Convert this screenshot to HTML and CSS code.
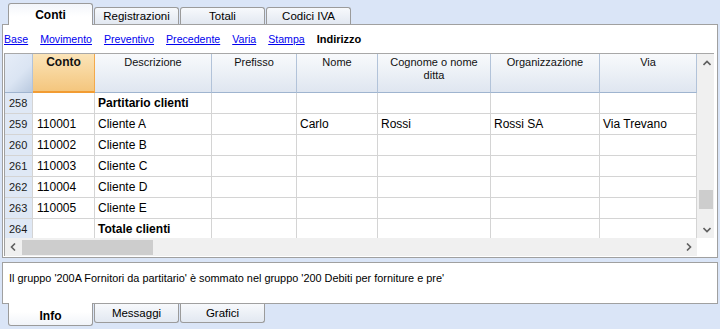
FILE: index.html
```html
<!DOCTYPE html>
<html lang="it">
<head>
<meta charset="utf-8">
<title>Conti</title>
<link rel="stylesheet" href="styles.css">
</head>
<body>
<div class="tabs tabs-top">
  <div class="tab active">Conti</div>
  <div class="tab">Registrazioni</div>
  <div class="tab">Totali</div>
  <div class="tab">Codici IVA</div>
</div>
<div class="panel">
  <div class="views">
    <a href="#">Base</a>
    <a href="#">Movimento</a>
    <a href="#">Preventivo</a>
    <a href="#">Precedente</a>
    <a href="#">Varia</a>
    <a href="#">Stampa</a>
    <span class="current">Indirizzo</span>
  </div>
  <div class="grid">
    <div class="table">
      <div class="row head">
        <div class="c c-num corner"></div>
        <div class="c c-conto sel">Conto</div>
        <div class="c c-desc">Descrizione</div>
        <div class="c c-pref">Prefisso</div>
        <div class="c c-nome">Nome</div>
        <div class="c c-cogn">Cognome o nome<br>ditta</div>
        <div class="c c-org">Organizzazione</div>
        <div class="c c-via">Via</div>
      </div>
      <div class="row">
        <div class="c c-num">258</div><div class="c c-conto"></div><div class="c c-desc b">Partitario clienti</div><div class="c c-pref"></div><div class="c c-nome"></div><div class="c c-cogn"></div><div class="c c-org"></div><div class="c c-via"></div>
      </div>
      <div class="row">
        <div class="c c-num">259</div><div class="c c-conto">110001</div><div class="c c-desc">Cliente A</div><div class="c c-pref"></div><div class="c c-nome">Carlo</div><div class="c c-cogn">Rossi</div><div class="c c-org">Rossi SA</div><div class="c c-via">Via Trevano</div>
      </div>
      <div class="row">
        <div class="c c-num">260</div><div class="c c-conto">110002</div><div class="c c-desc">Cliente B</div><div class="c c-pref"></div><div class="c c-nome"></div><div class="c c-cogn"></div><div class="c c-org"></div><div class="c c-via"></div>
      </div>
      <div class="row">
        <div class="c c-num">261</div><div class="c c-conto">110003</div><div class="c c-desc">Cliente C</div><div class="c c-pref"></div><div class="c c-nome"></div><div class="c c-cogn"></div><div class="c c-org"></div><div class="c c-via"></div>
      </div>
      <div class="row">
        <div class="c c-num">262</div><div class="c c-conto">110004</div><div class="c c-desc">Cliente D</div><div class="c c-pref"></div><div class="c c-nome"></div><div class="c c-cogn"></div><div class="c c-org"></div><div class="c c-via"></div>
      </div>
      <div class="row">
        <div class="c c-num">263</div><div class="c c-conto">110005</div><div class="c c-desc">Cliente E</div><div class="c c-pref"></div><div class="c c-nome"></div><div class="c c-cogn"></div><div class="c c-org"></div><div class="c c-via"></div>
      </div>
      <div class="row">
        <div class="c c-num">264</div><div class="c c-conto"></div><div class="c c-desc b">Totale clienti</div><div class="c c-pref"></div><div class="c c-nome"></div><div class="c c-cogn"></div><div class="c c-org"></div><div class="c c-via"></div>
      </div>
    </div>
    <div class="vscroll">
      <div class="sbtn"><svg width="8" height="6" viewBox="0 0 8 6"><polyline points="0.5,5 4,1.5 7.5,5" fill="none" stroke="#5f5f5f" stroke-width="1.6"/></svg></div>
      <div class="vtrack"><div class="vthumb"></div></div>
      <div class="sbtn"><svg width="8" height="6" viewBox="0 0 8 6"><polyline points="0.5,1 4,4.5 7.5,1" fill="none" stroke="#5f5f5f" stroke-width="1.6"/></svg></div>
    </div>
    <div class="hscroll">
      <div class="hbtn"><svg width="6" height="8" viewBox="0 0 6 8"><polyline points="5,0.5 1.5,4 5,7.5" fill="none" stroke="#5f5f5f" stroke-width="1.6"/></svg></div>
      <div class="hthumb"></div>
      <div class="hspace"></div>
      <div class="hbtn"><svg width="6" height="8" viewBox="0 0 6 8"><polyline points="1,0.5 4.5,4 1,7.5" fill="none" stroke="#5f5f5f" stroke-width="1.6"/></svg></div>
    </div>
    <div class="scorner"></div>
  </div>
</div>
<div class="info">Il gruppo '200A Fornitori da partitario' è sommato nel gruppo '200 Debiti per forniture e pre'</div>
<div class="tabs tabs-bottom">
  <div class="tab active">Info</div>
  <div class="tab">Messaggi</div>
  <div class="tab">Grafici</div>
</div>
</body>
</html>
```
FILE: styles.css
```css
* { box-sizing: border-box; }
html, body { margin: 0; padding: 0; }
body {
  width: 720px;
  height: 329px;
  overflow: hidden;
  background: #dae5f7;
  font-family: "Liberation Sans", Arial, sans-serif;
  font-size: 11px;
  color: #000;
}

/* tabs */
.tabs {
  display: flex;
  padding-left: 8px;
  gap: 1px;
}
.tabs-top {
  height: 24px;
  align-items: flex-end;
}
.tab {
  width: 85px;
  text-align: center;
  border: 1px solid #9b9b9b;
  color: #000;
  font-size: 11.5px;
}
.tabs-top .tab {
  height: 17px;
  line-height: 16px;
  border-bottom: none;
  border-radius: 3px 3px 0 0;
  background: linear-gradient(#f7f9fc, #e2e8f1);
}
.tabs-top .tab.active {
  height: 22px;
  margin-bottom: -1px;
  position: relative;
  z-index: 1;
  background: linear-gradient(#f3f6fb, #ffffff 60%);
  font-weight: bold;
  font-size: 12px;
  line-height: 22px;
}
.tabs-bottom {
  align-items: flex-start;
}
.tabs-bottom .tab {
  height: 19px;
  line-height: 18px;
  border-top: none;
  border-radius: 0 0 3px 3px;
  background: linear-gradient(#f7f9fc, #e2e8f1);
}
.tabs-bottom .tab.active {
  height: 23px;
  margin-top: -1px;
  position: relative;
  z-index: 1;
  background: linear-gradient(#ffffff 40%, #f1f4f9);
  font-weight: bold;
  font-size: 12px;
  line-height: 26px;
}

/* main panel */
.panel {
  margin: 0 2px;
  border: 1px solid #a0a0a0;
  background: #fff;
  padding: 0 3px 1px 1px;
}
.views {
  height: 28px;
  padding: 7px 0 0 0;
  display: flex;
  gap: 12px;
  line-height: 14px;
  font-size: 10.6px;
}
.views a {
  color: #0000ee;
  text-decoration: underline;
}
.views .current {
  font-weight: bold;
  font-size: 11px;
}

.grid {
  display: grid;
  grid-template-columns: 692px 17px;
  grid-template-rows: 184px 18px;
  border-left: 1px solid #a0a0a0;
  border-top: 1px solid #a8a8a8;
  width: 710px;
}
.table {
  overflow: hidden;
}
.row {
  display: flex;
  height: 21px;
}
.c {
  flex: none;
  height: 100%;
  border-right: 1px solid #d4d4d4;
  border-bottom: 1px solid #d4d4d4;
  padding-left: 3px;
  line-height: 20px;
  font-size: 12px;
  white-space: nowrap;
  overflow: hidden;
}
.b { font-weight: bold; }
.c-num {
  width: 28px;
  background: #dfe8f5;
  font-size: 11px;
  color: #1a1a1a;
  padding-left: 4px;
}
.c-conto { width: 62px; padding-left: 4px; }
.c-desc { width: 117px; }
.c-pref { width: 85px; }
.c-nome { width: 81px; }
.c-cogn { width: 113px; }
.c-org { width: 109px; }
.c-via { width: 97px; }

.row.head {
  height: 39px;
}
.head .c {
  background: linear-gradient(#f8fafc, #dfe6f0);
  border-right-color: #b2c3d9;
  border-bottom-color: #9fb4cf;
  font-size: 11px;
  line-height: 13px;
  padding: 2px 2px 0;
  text-align: center;
  white-space: nowrap;
  color: #111;
}
.head .corner {
  background: linear-gradient(135deg, #e6edf8 0%, #dbe5f3 55%, #b9c9df 100%);
}
.head .sel {
  background: linear-gradient(#fbe4b8, #f4c67e);
  border-right-color: #f3a94b;
  border-bottom: 2px solid #f29c33;
  font-weight: bold;
  font-size: 12px;
}

.vscroll {
  grid-row: 1;
  grid-column: 2;
  background: #f0f0f0;
  display: flex;
  flex-direction: column;
}
.sbtn {
  height: 17px;
  display: flex;
  align-items: center;
  justify-content: center;
  padding-left: 2px;
}
.vtrack {
  flex: 1;
  padding-left: 2px;
}
.vthumb {
  margin-top: 119px;
  width: 14px;
  height: 19px;
  background: #cdcdcd;
}
.hscroll {
  grid-row: 2;
  grid-column: 1;
  background: #f0f0f0;
  display: flex;
  align-items: center;
}
.hbtn {
  width: 16px;
  height: 18px;
  display: flex;
  align-items: center;
  justify-content: center;
}
.hthumb {
  margin-left: 1px;
  width: 131px;
  height: 15px;
  background: #cdcdcd;
}
.hspace { flex: 1; }
.scorner {
  grid-row: 2;
  grid-column: 2;
  background: #fff;
}

/* info */
.info {
  margin: 4px 2px 0;
  height: 42px;
  border: 1px solid #a0a0a0;
  background: #fff;
  padding: 8px 0 0 6px;
  font-size: 10.9px;
  line-height: 14px;
  color: #000;
}
```
